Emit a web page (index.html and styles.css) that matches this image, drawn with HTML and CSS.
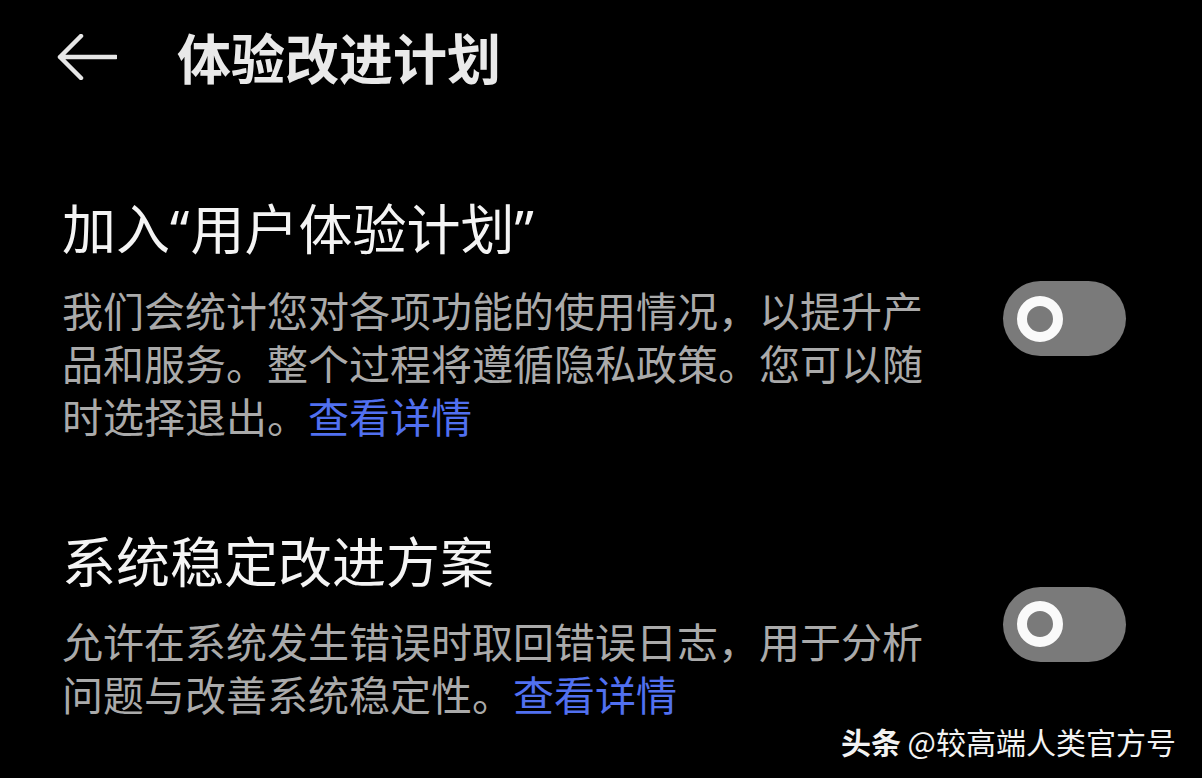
FILE: index.html
```html
<!DOCTYPE html>
<html lang="zh-CN">
<head>
    <meta charset="UTF-8">
    <meta name="viewport" content="width=device-width, initial-scale=1.0">
    <title>体验改进计划</title>
    <link rel="stylesheet" href="styles.css">
</head>
<body>
    <div class="page">
        <div class="header">
            <svg class="back" width="60" height="46" viewBox="0 0 60 46">
                <path d="M24 2 L3 23 L24 44 M3 23 H59" fill="none" stroke="#e6e6e6" stroke-width="4.5" stroke-linecap="round" stroke-linejoin="round"/>
            </svg>
            <h1>体验改进计划</h1>
        </div>

        <div class="setting">
            <div class="text">
                <h2>加入<span class="quote">“</span>用户体验计划<span class="quote">”</span></h2>
                <p>我们会统计您对各项功能的使用情况，以提升产品和服务。整个过程将遵循隐私政策。您可以随时选择退出。<a href="#">查看详情</a></p>
            </div>
            <div class="switch"><span class="knob"></span></div>
        </div>

        <div class="setting">
            <div class="text">
                <h2>系统稳定改进方案</h2>
                <p>允许在系统发生错误时取回错误日志，用于分析问题与改善系统稳定性。<a href="#">查看详情</a></p>
            </div>
            <div class="switch"><span class="knob"></span></div>
        </div>

        <div class="watermark"><b>头条</b> @较高端人类官方号</div>
    </div>
</body>
</html>
```

FILE: styles.css
```css
body {
    margin: 0;
    background-color: #000;
    font-family: "Noto Sans CJK SC", "Noto Sans", sans-serif;
}
.page {
    position: relative;
    width: 1202px;
    height: 778px;
    overflow: hidden;
    background-color: #000;
}
.header {
    display: flex;
    align-items: center;
    padding: 25px 0 0 57px;
    height: 64px;
}
.back {
    display: block;
    margin-right: 60px;
}
h1 {
    margin: 0;
    font-size: 54px;
    font-weight: 700;
    line-height: 64px;
    color: #e9e9e9;
}
.setting {
    display: flex;
    align-items: center;
    padding: 0 76px 0 62px;
    margin-top: 86px;
}
.header + .setting {
    margin-top: 106px;
}
.text {
    width: 870px;
}
h2 {
    margin: 0 0 22px;
    font-size: 54px;
    font-weight: 400;
    line-height: 64px;
    color: #f4f4f4;
}
.quote {
    font-family: "Noto Sans", sans-serif;
    letter-spacing: 1px;
}
p {
    margin: 0;
    font-size: 41px;
    line-height: 53px;
    color: #aaaaaa;
}
p a {
    color: #5170f0;
    text-decoration: none;
}
.switch {
    margin-left: auto;
    width: 123px;
    height: 75px;
    border-radius: 38px;
    background-color: #7a7a7a;
    display: flex;
    align-items: center;
    padding-left: 14px;
    box-sizing: border-box;
}
.knob {
    width: 46px;
    height: 46px;
    border: 10px solid #fafafa;
    border-radius: 50%;
    box-sizing: border-box;
}
.watermark {
    position: absolute;
    right: 26px;
    bottom: 20px;
    font-size: 30px;
    line-height: 34px;
    color: #f2f2f2;
}
.watermark b {
    font-weight: 700;
}
```
